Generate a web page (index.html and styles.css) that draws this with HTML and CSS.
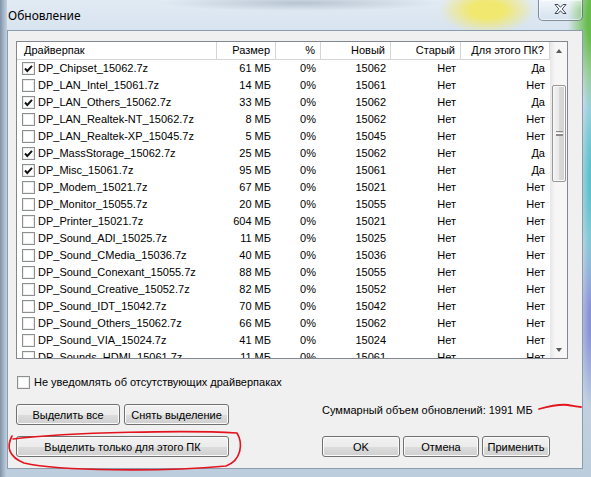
FILE: index.html
```html
<!DOCTYPE html>
<html lang="ru">
<head>
<meta charset="utf-8">
<title>Обновление</title>
<link rel="stylesheet" href="styles.css">
</head>
<body>
<div class="window">
  <div class="titlebar">
    <span class="title">Обновление</span>
    <div class="close">
      <svg width="45" height="21" viewBox="0 0 45 21">
        <path d="M17 5.5 L20 5.5 L22.5 8.3 L25 5.5 L28 5.5 L24.2 10 L28 14.5 L25 14.5 L22.5 11.7 L20 14.5 L17 14.5 L20.8 10 Z" fill="#fff" stroke="#3d4a58" stroke-width="1" stroke-linejoin="round"/>
      </svg>
    </div>
  </div>
  <div class="client">
    <div class="list">
      <div class="table">
        <div class="row head">
          <div class="c c1">Драйверпак</div>
          <div class="c r">Размер</div>
          <div class="c r">%</div>
          <div class="c r">Новый</div>
          <div class="c r">Старый</div>
          <div class="c r">Для этого ПК?</div>
        </div>
        <div class="body">
          <div class="row"><div class="c c1"><span class="cb on"><svg viewBox="0 0 11 11"><path d="M2 5.5 L4.3 8 L9 2.8"/></svg></span>DP_Chipset_15062.7z</div><div class="c r">61 МБ</div><div class="c r">0%</div><div class="c r">15062</div><div class="c r">Нет</div><div class="c r">Да</div></div>
          <div class="row"><div class="c c1"><span class="cb"></span>DP_LAN_Intel_15061.7z</div><div class="c r">14 МБ</div><div class="c r">0%</div><div class="c r">15061</div><div class="c r">Нет</div><div class="c r">Нет</div></div>
          <div class="row"><div class="c c1"><span class="cb on"><svg viewBox="0 0 11 11"><path d="M2 5.5 L4.3 8 L9 2.8"/></svg></span>DP_LAN_Others_15062.7z</div><div class="c r">33 МБ</div><div class="c r">0%</div><div class="c r">15062</div><div class="c r">Нет</div><div class="c r">Да</div></div>
          <div class="row"><div class="c c1"><span class="cb"></span>DP_LAN_Realtek-NT_15062.7z</div><div class="c r">8 МБ</div><div class="c r">0%</div><div class="c r">15062</div><div class="c r">Нет</div><div class="c r">Нет</div></div>
          <div class="row"><div class="c c1"><span class="cb"></span>DP_LAN_Realtek-XP_15045.7z</div><div class="c r">5 МБ</div><div class="c r">0%</div><div class="c r">15045</div><div class="c r">Нет</div><div class="c r">Нет</div></div>
          <div class="row"><div class="c c1"><span class="cb on"><svg viewBox="0 0 11 11"><path d="M2 5.5 L4.3 8 L9 2.8"/></svg></span>DP_MassStorage_15062.7z</div><div class="c r">25 МБ</div><div class="c r">0%</div><div class="c r">15062</div><div class="c r">Нет</div><div class="c r">Да</div></div>
          <div class="row"><div class="c c1"><span class="cb on"><svg viewBox="0 0 11 11"><path d="M2 5.5 L4.3 8 L9 2.8"/></svg></span>DP_Misc_15061.7z</div><div class="c r">95 МБ</div><div class="c r">0%</div><div class="c r">15061</div><div class="c r">Нет</div><div class="c r">Да</div></div>
          <div class="row"><div class="c c1"><span class="cb"></span>DP_Modem_15021.7z</div><div class="c r">67 МБ</div><div class="c r">0%</div><div class="c r">15021</div><div class="c r">Нет</div><div class="c r">Нет</div></div>
          <div class="row"><div class="c c1"><span class="cb"></span>DP_Monitor_15055.7z</div><div class="c r">20 МБ</div><div class="c r">0%</div><div class="c r">15055</div><div class="c r">Нет</div><div class="c r">Нет</div></div>
          <div class="row"><div class="c c1"><span class="cb"></span>DP_Printer_15021.7z</div><div class="c r">604 МБ</div><div class="c r">0%</div><div class="c r">15021</div><div class="c r">Нет</div><div class="c r">Нет</div></div>
          <div class="row"><div class="c c1"><span class="cb"></span>DP_Sound_ADI_15025.7z</div><div class="c r">11 МБ</div><div class="c r">0%</div><div class="c r">15025</div><div class="c r">Нет</div><div class="c r">Нет</div></div>
          <div class="row"><div class="c c1"><span class="cb"></span>DP_Sound_CMedia_15036.7z</div><div class="c r">40 МБ</div><div class="c r">0%</div><div class="c r">15036</div><div class="c r">Нет</div><div class="c r">Нет</div></div>
          <div class="row"><div class="c c1"><span class="cb"></span>DP_Sound_Conexant_15055.7z</div><div class="c r">88 МБ</div><div class="c r">0%</div><div class="c r">15055</div><div class="c r">Нет</div><div class="c r">Нет</div></div>
          <div class="row"><div class="c c1"><span class="cb"></span>DP_Sound_Creative_15052.7z</div><div class="c r">82 МБ</div><div class="c r">0%</div><div class="c r">15052</div><div class="c r">Нет</div><div class="c r">Нет</div></div>
          <div class="row"><div class="c c1"><span class="cb"></span>DP_Sound_IDT_15042.7z</div><div class="c r">70 МБ</div><div class="c r">0%</div><div class="c r">15042</div><div class="c r">Нет</div><div class="c r">Нет</div></div>
          <div class="row"><div class="c c1"><span class="cb"></span>DP_Sound_Others_15062.7z</div><div class="c r">66 МБ</div><div class="c r">0%</div><div class="c r">15062</div><div class="c r">Нет</div><div class="c r">Нет</div></div>
          <div class="row"><div class="c c1"><span class="cb"></span>DP_Sound_VIA_15024.7z</div><div class="c r">41 МБ</div><div class="c r">0%</div><div class="c r">15024</div><div class="c r">Нет</div><div class="c r">Нет</div></div>
          <div class="row"><div class="c c1"><span class="cb"></span>DP_Sounds_HDMI_15061.7z</div><div class="c r">11 МБ</div><div class="c r">0%</div><div class="c r">15061</div><div class="c r">Нет</div><div class="c r">Нет</div></div>
        </div>
      </div>
      <div class="scrollbar">
        <div class="sb-btn"><span class="arrow up"></span></div>
        <div class="thumb"><span class="grip"></span></div>
        <div class="sb-btn down"><span class="arrow dn"></span></div>
      </div>
    </div>

    <div class="option"><span class="cb"></span><span>Не уведомлять об отсутствующих драйверпаках</span></div>

    <div class="bottom">
      <div class="btn-row">
        <button class="btn w104">Выделить все</button>
        <button class="btn w105">Снять выделение</button>
      </div>
      <div class="summary">Суммарный объем обновлений: 1991 МБ</div>
      <button class="btn wide">Выделить только для этого ПК</button>
      <div class="btn-row dlg">
        <button class="btn w78">OK</button>
        <button class="btn w76">Отмена</button>
        <button class="btn w68">Применить</button>
      </div>
    </div>
  </div>

  <svg class="marks" width="591" height="477" viewBox="0 0 591 477">
    <path d="M13 439 C 70 432, 190 430, 237 433 C 243 443, 242 460, 226 466 C 160 472, 60 471, 24 463 C 9 457, 6 447, 12 436" fill="none" stroke="#e3141e" stroke-width="1.6" stroke-linecap="round"/>
    <path d="M539 409 C 550 406, 560 404, 568 405 C 574 406, 578 407, 581 407" fill="none" stroke="#e3141e" stroke-width="1.8" stroke-linecap="round"/>
  </svg>
</div>
</body>
</html>
```

FILE: styles.css
```css
* { box-sizing: border-box; }
html, body { margin: 0; padding: 0; }
body {
  width: 591px;
  height: 477px;
  overflow: hidden;
  font-family: "Liberation Sans", Arial, sans-serif;
  font-size: 11px;
  color: #000;
}

.window {
  position: relative;
  width: 591px;
  height: 477px;
  display: flex;
  flex-direction: column;
  background:
    radial-gradient(ellipse 48px 24px at 487px 10px, rgba(241,232,112,1) 35%, rgba(241,232,112,0) 100%),
    radial-gradient(ellipse 26px 90px at 594px 20px, rgba(104,188,78,1) 25%, rgba(104,188,78,0) 100%),
    radial-gradient(ellipse 14px 120px at 592px 180px, rgba(80,190,200,0.9) 20%, rgba(80,190,200,0) 100%),
    radial-gradient(ellipse 14px 90px at 592px 320px, rgba(120,130,210,0.8) 20%, rgba(120,130,210,0) 100%),
    radial-gradient(ellipse 140px 8px at 300px 3px, rgba(150,165,180,0.55), rgba(150,165,180,0) 100%),
    linear-gradient(to right, #7f93a7 0, #a8b9ca 4px, #c3d1df 7px) 0 0 / 7px 477px no-repeat,
    linear-gradient(to bottom, #e2ebf4 0, #d7e3ef 30px, #bccddd 100%);
}

.titlebar {
  height: 30px;
  display: flex;
  align-items: flex-start;
  padding-left: 8px;
}
.title {
  font-family: "Noto Sans", "Liberation Sans", sans-serif;
  font-size: 12px;
  line-height: 16px;
  margin-top: 8px;
  color: #000;
}
.close {
  margin-left: auto;
  margin-right: 8px;
  width: 45px;
  height: 21px;
  border: 1px solid rgba(60, 75, 90, 0.6);
  border-top: none;
  border-radius: 0 0 5px 5px;
  background: linear-gradient(to bottom, rgba(255,255,255,0.55), rgba(255,255,255,0.15) 50%, rgba(200,220,235,0.3));
  box-shadow: inset 0 0 0 1px rgba(255,255,255,0.5);
}
.close svg { display: block; margin: -1px 0 0 -1px; }

.client {
  flex: 1;
  margin: 0 8px 8px 7px;
  background: #f0f0f0;
  border: 1px solid #8a9bac;
  padding: 10px 0 0 8px;
}

.list {
  width: 552px;
  height: 318px;
  border: 1px solid #828790;
  background: #fff;
  display: flex;
}
.table { width: 533px; }
.row {
  display: grid;
  grid-template-columns: 200px 59px 45px 70px 70px 89px;
  height: 17px;
  line-height: 17px;
  white-space: nowrap;
}
.head {
  height: 18px;
  border-bottom: 1px solid #d5d5d5;
}
.head .c { border-right: 1px solid #d5d5d5; }
.head .c1 { padding-left: 7px; }
.c { padding-right: 5px; overflow: hidden; }
.r { text-align: right; }
.c1 {
  display: flex;
  align-items: center;
  padding-left: 5px;
  gap: 3px;
}
.body { height: 298px; overflow: hidden; }

.cb {
  flex: none;
  width: 13px;
  height: 13px;
  border: 1px solid #8e8f8f;
  background: #fff;
  box-shadow: inset 0 0 0 1px #ececec;
  display: inline-block;
}
.cb svg {
  display: block;
  width: 11px;
  height: 11px;
  fill: none;
  stroke: #111;
  stroke-width: 1.9;
}

.scrollbar {
  width: 17px;
  display: flex;
  flex-direction: column;
  background: linear-gradient(to right, #e6e6e6, #f6f6f6 30%, #f6f6f6);
}
.sb-btn {
  height: 17px;
  display: flex;
  align-items: center;
  justify-content: center;
}
.sb-btn.down { margin-top: auto; }
.arrow {
  width: 0;
  height: 0;
  border-left: 3.5px solid transparent;
  border-right: 3.5px solid transparent;
}
.arrow.up { border-bottom: 4px solid #5a5a5a; }
.arrow.dn { border-top: 4px solid #5a5a5a; }
.thumb {
  margin: 26px 1px 0 2px;
  height: 97px;
  border: 1px solid #979797;
  border-radius: 2px;
  background: linear-gradient(to right, #f4f4f4, #e8e8e8 50%, #d9d9d9 50%, #d2d2d2);
  box-shadow: inset 0 0 0 1px #f8f8f8;
  display: flex;
  align-items: center;
  justify-content: center;
}
.grip {
  width: 7px;
  height: 5px;
  border-top: 1px solid #8a8a8a;
  border-bottom: 1px solid #8a8a8a;
  background: linear-gradient(#fff 0 1px, #8a8a8a 1px 2px, transparent 2px) 0 1px / 7px 3px no-repeat;
}

.option {
  display: flex;
  align-items: center;
  gap: 4px;
  margin: 17px 0 0 1px;
  height: 13px;
  line-height: 13px;
}

.bottom {
  margin-top: 15px;
  display: grid;
  grid-template-columns: 213px 228px;
  grid-template-rows: 21px 21px;
  column-gap: 93px;
  row-gap: 11px;
}
.btn-row { display: flex; gap: 4px; }
.btn-row.dlg { gap: 3px; }
.summary { line-height: 13px; padding-top: 0; }

.btn {
  height: 21px;
  padding: 0;
  border: 1px solid #707070;
  border-radius: 3px;
  background: linear-gradient(to bottom, #f2f2f2 0%, #ebebeb 50%, #dddddd 50%, #cfcfcf 100%);
  box-shadow: inset 0 0 0 1px #fbfbfb;
  font-family: "Liberation Sans", Arial, sans-serif;
  font-size: 11px;
  color: #000;
}
.wide { width: 213px; }
.w104 { width: 104px; }
.w105 { width: 105px; }
.w78 { width: 78px; }
.w76 { width: 76px; }
.w68 { width: 68px; }

.marks {
  position: absolute;
  left: 0;
  top: 0;
  pointer-events: none;
}
```
